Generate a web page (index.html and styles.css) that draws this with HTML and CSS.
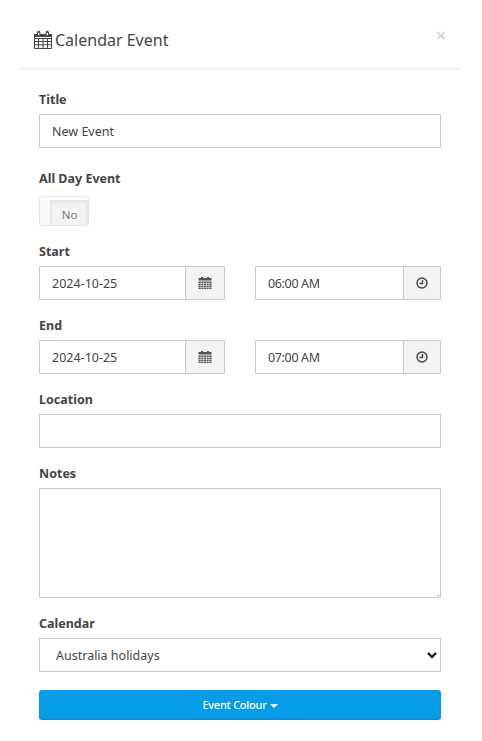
FILE: index.html
```html
<!DOCTYPE html>
<html lang="en">
<head>
<meta charset="utf-8">
<title>Calendar Event</title>
<link rel="stylesheet" href="styles.css">
</head>
<body>
<div class="modal">
  <header class="modal-header">
    <h4 class="modal-title">
      <svg class="title-icon" width="18" height="19" viewBox="0 0 18 19" aria-hidden="true">
        <path class="ic-line" d="M.5 4.500h17v14H.5zM.5 8.500h17M.5 11.500h17M.5 14.800h17M4.500 8.500v10M9 8.500v10M13.500 8.500v10"/>
        <path class="ic-fill" d="M3 2.500a1.700 1.700 0 0 1 3.400 0V4h5.200V2.500a1.700 1.700 0 0 1 3.400 0V4H17.500v3H.5V4H3z"/>
        <path class="ic-hole" d="M4 2.800h1.400v2.500H4zM12.600 2.800H14v2.500h-1.400z"/>
      </svg>
      <span>Calendar Event</span>
    </h4>
    <span class="close">×</span>
  </header>
  <form class="modal-body">
    <div class="group">
      <label class="lbl">Title</label>
      <input class="control" type="text" value="New Event">
    </div>
    <div class="group group-switch">
      <label class="lbl lbl-switch">All Day Event</label>
      <div class="switch"><span class="switch-left"></span><span class="switch-right">No</span></div>
    </div>
    <div class="group">
      <label class="lbl">Start</label>
      <div class="pair">
        <div class="input-group">
          <input class="control" type="text" value="2024-10-25">
          <span class="addon addon-date">
            <svg width="14" height="14" viewBox="0 0 14 14" aria-hidden="true"><path class="ic-solid" d="M3 1h2v1h4V1h2v1h2.500v2.500H.5V2H3zM.5 5.500h13V13H.5z"/><path class="ic-grid" d="M.5 7.500h13M.5 9.500h13M.5 11.500h13M3 5.500V13M5.500 5.500V13M8.500 5.500V13M11 5.500V13"/></svg>
          </span>
        </div>
        <div class="input-group">
          <input class="control time" type="text" value="06:00 AM">
          <span class="addon addon-time">
            <svg width="14" height="14" viewBox="0 0 14 14" aria-hidden="true"><circle class="ic-clock" cx="7" cy="7" r="5"/><path class="ic-clock" d="M7.500 3.800v3.700H4.500"/></svg>
          </span>
        </div>
      </div>
    </div>
    <div class="group">
      <label class="lbl">End</label>
      <div class="pair">
        <div class="input-group">
          <input class="control" type="text" value="2024-10-25">
          <span class="addon addon-date">
            <svg width="14" height="14" viewBox="0 0 14 14" aria-hidden="true"><path class="ic-solid" d="M3 1h2v1h4V1h2v1h2.500v2.500H.5V2H3zM.5 5.500h13V13H.5z"/><path class="ic-grid" d="M.5 7.500h13M.5 9.500h13M.5 11.500h13M3 5.500V13M5.500 5.500V13M8.500 5.500V13M11 5.500V13"/></svg>
          </span>
        </div>
        <div class="input-group">
          <input class="control time" type="text" value="07:00 AM">
          <span class="addon addon-time">
            <svg width="14" height="14" viewBox="0 0 14 14" aria-hidden="true"><circle class="ic-clock" cx="7" cy="7" r="5"/><path class="ic-clock" d="M7.500 3.800v3.700H4.500"/></svg>
          </span>
        </div>
      </div>
    </div>
    <div class="group">
      <label class="lbl">Location</label>
      <input class="control" type="text">
    </div>
    <div class="group">
      <label class="lbl">Notes</label>
      <textarea class="control notes"></textarea>
    </div>
    <div class="group group-select">
      <label class="lbl">Calendar</label>
      <div class="select-wrap">
        <select class="control select"><option>Australia holidays</option></select>
        <svg class="chevron" width="10" height="7" viewBox="0 0 10 7" aria-hidden="true"><path d="M1 1l4 4 4-4"/></svg>
      </div>
    </div>
    <button class="btn" type="button">Event Colour<span class="caret"></span></button>
  </form>
</div>
</body>
</html>
```
FILE: styles.css
```css
* { box-sizing: border-box; }
html, body { margin: 0; padding: 0; background: #fff; }
body {
  font-family: "Noto Sans", "Open Sans", sans-serif;
  font-size: 12.5px;
  line-height: 20px;
  color: #444;
  width: 482px;
  height: 741px;
  overflow: hidden;
}
.modal { padding: 0 21px 0 18px; }
.modal-header {
  height: 69px;
  border-bottom: 1px solid #e5e5e5;
  position: relative;
  display: flex;
  align-items: center;
  padding: 12px 0 0 16px;
}
.modal-title {
  margin: 0;
  font-size: 16px;
  font-weight: 400;
  display: flex;
  align-items: center;
  gap: 3px;
  color: #444;
}
.title-icon { display: block; margin-top: -2px; }
.ic-line { fill: none; stroke: #444; stroke-width: 1; }
.ic-fill { fill: #444; }
.ic-hole { fill: #fff; }
.ic-solid { fill: #555; }
.ic-grid { fill: none; stroke: #f2f2f2; stroke-width: .6; }
.ic-clock { fill: none; stroke: #444; stroke-width: 1.4; }
.close {
  position: absolute;
  right: 15px;
  top: 25px;
  font-size: 18px;
  font-weight: 700;
  color: #d8d8d8;
}
.modal-body { padding: 20px 20px 0 21px; }
.group { margin-bottom: 15px; }
.group-switch { margin-top: 20px; }
.group-select { margin-bottom: 18px; }
.lbl {
  display: block;
  font-weight: 700;
  padding-top: 1px;
  margin-bottom: 4px;
  height: 21px;
  color: #444;
}
.lbl-switch { margin-bottom: 7px; }
.control {
  display: block;
  width: 100%;
  height: 34px;
  padding: 6px 12px;
  border: 1px solid #ccc;
  border-radius: 0;
  background: #fff;
  font: inherit;
  color: #444;
  outline: none;
}
.time { letter-spacing: -.35px; }
.notes {
  height: 110px;
  resize: none;
  background: linear-gradient(#777, #777) no-repeat right 1px bottom 1px / 1px 1px;
}
.select-wrap { position: relative; }
.select { padding: 7px 12px 7px 16px; appearance: none; -webkit-appearance: none; }
.chevron { position: absolute; right: 4px; top: 14px; }
.chevron path { fill: none; stroke: #000; stroke-width: 2.2; }
.pair { display: grid; grid-template-columns: 186px 186px; gap: 30px; }
.input-group { display: flex; }
.input-group .control { flex: 1; min-width: 0; border-right: 0; }
.addon {
  flex: none;
  height: 34px;
  border: 1px solid #ccc;
  background: #f3f3f3;
  display: flex;
  align-items: center;
  justify-content: center;
}
.addon-date { width: 40px; }
.addon-time { width: 38px; }
.switch {
  width: 50px;
  height: 30px;
  border: 1px solid #e3e3e3;
  border-radius: 3px;
  display: flex;
  overflow: hidden;
  background: #fff;
  font-size: 11.5px;
  color: #777;
}
.switch-left { width: 11px; background: #fafafa; border-right: 1px solid #e3e3e3; margin-top: 3px; }
.switch-right {
  flex: 1;
  margin-top: 3px;
  text-align: center;
  line-height: 30px;
  background: #f4f4f4;
  box-shadow: inset 0 3px 3px #e6e6e6, inset -2px 0 2px #e6e6e6;
}
.btn {
  display: block;
  width: 100%;
  height: 30px;
  border: 0;
  border-bottom: 2px solid #0a8fd8;
  border-radius: 3px;
  background: #069ce8;
  color: #fff;
  font: inherit;
  font-size: 11px;
  font-weight: 500;
  letter-spacing: -.25px;
  padding: 1px 0 0;
}
.caret {
  display: inline-block;
  width: 0;
  height: 0;
  margin-left: 3px;
  vertical-align: middle;
  border-top: 4px solid #fff;
  border-left: 4px solid transparent;
  border-right: 4px solid transparent;
}
```
